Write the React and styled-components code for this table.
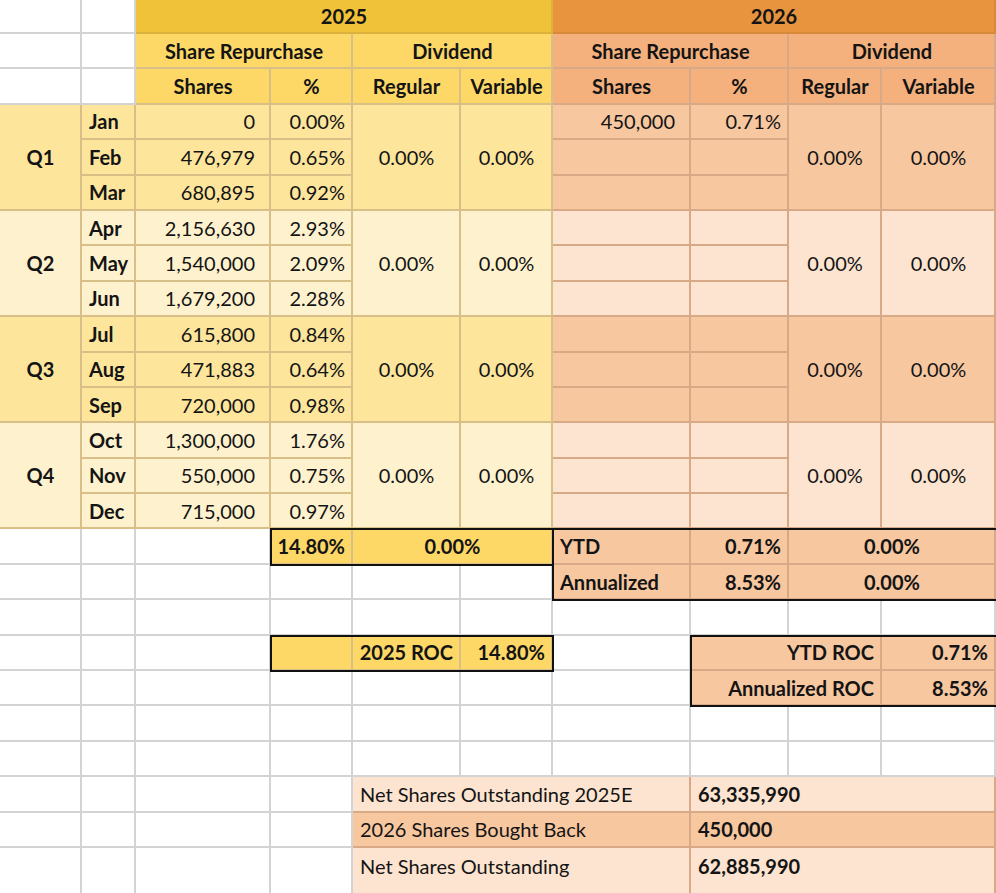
import styled, { createGlobalStyle } from 'styled-components'

const GlobalStyle = createGlobalStyle`
  html, body {
    margin: 0;
    padding: 0;
    background: #fff;
  }
  body {
    font-family: Lato, "Open Sans", "Liberation Sans", sans-serif;
    color: #141414;
    overflow: hidden;
  }
`

const P = {
  goldTitle: '#F0C239',
  goldHead: '#FDD867',
  goldA: '#FDE59C',
  goldB: '#FEF2CE',
  orTitle: '#E8943E',
  orHead: '#F4B07D',
  orA: '#F7C7A0',
  orB: '#FCE4D0',
  goldLine: '#D8BF88',
  orLine: '#D8A987',
  grid: '#D3D3D3',
}

const justify = { left: 'flex-start', right: 'flex-end', center: 'center' }

const Sheet = styled.div`
  display: grid;
  grid-template-columns: 82px 54px 135px 82px 108px 92px 138px 98px 93px 114px;
  grid-template-rows: 34px repeat(23, 35.4px) 1fr;
  width: 996px;
  height: 893px;
  overflow: hidden;
  font-size: 20px;
`

const Cell = styled.div`
  grid-column: ${(p) => p.$col} / span ${(p) => p.$cs || 1};
  grid-row: ${(p) => p.$row} / span ${(p) => p.$rs || 1};
  display: flex;
  align-items: center;
  justify-content: ${(p) => justify[p.$align || 'left']};
  box-sizing: border-box;
  padding: 0 ${(p) => p.$pr ?? 6}px ${(p) => (p.$row === 25 ? 9 : 0)}px 7px;
  background: ${(p) => p.$bg || '#fff'};
  border-right: 2px solid ${(p) => p.$line || P.grid};
  border-bottom: ${(p) => (p.$row === 25 ? 'none' : `2px solid ${p.$line || P.grid}`)};
  font-weight: ${(p) => (p.$bold ? 700 : 400)};
  white-space: nowrap;
  overflow: hidden;
`

// black outline drawn over a block of cells
const Frame = styled.div`
  grid-column: ${(p) => p.$col} / span ${(p) => p.$cs || 1};
  grid-row: ${(p) => p.$row} / span ${(p) => p.$rs || 1};
  margin: -1px ${(p) => (p.$edge ? -4 : -1)}px -1px -1px;
  border: 2px solid #111;
  z-index: 1;
  pointer-events: none;
`

const months = [
  ['Jan', '0', '0.00%', '450,000', '0.71%'],
  ['Feb', '476,979', '0.65%'],
  ['Mar', '680,895', '0.92%'],
  ['Apr', '2,156,630', '2.93%'],
  ['May', '1,540,000', '2.09%'],
  ['Jun', '1,679,200', '2.28%'],
  ['Jul', '615,800', '0.84%'],
  ['Aug', '471,883', '0.64%'],
  ['Sep', '720,000', '0.98%'],
  ['Oct', '1,300,000', '1.76%'],
  ['Nov', '550,000', '0.75%'],
  ['Dec', '715,000', '0.97%'],
]

const cells = []
const add = (col, row, text, o = {}) => cells.push({ col, row, text, cs: 1, rs: 1, ...o })

const gold = (bg) => ({ bg, line: P.goldLine })
const orange = (bg) => ({ bg, line: P.orLine })

// headers
add(3, 1, '2025', { cs: 4, bg: P.goldTitle, line: '#DDB23C', bold: true, align: 'center' })
add(7, 1, '2026', { cs: 4, bg: P.orTitle, line: '#D9893A', bold: true, align: 'center' })
;[
  [3, gold(P.goldHead)],
  [7, orange(P.orHead)],
].forEach(([c, s]) => {
  add(c, 2, 'Share Repurchase', { ...s, cs: 2, bold: true, align: 'center' })
  add(c + 2, 2, 'Dividend', { ...s, cs: 2, bold: true, align: 'center' })
  ;['Shares', '%', 'Regular', 'Variable'].forEach((t, i) =>
    add(c + i, 3, t, { ...s, bold: true, align: 'center' })
  )
})

// quarters
for (let q = 0; q < 4; q++) {
  const r0 = 4 + q * 3
  const g = gold(q % 2 ? P.goldB : P.goldA)
  const o = orange(q % 2 ? P.orB : P.orA)
  add(1, r0, `Q${q + 1}`, { ...g, rs: 3, bold: true, align: 'center' })
  for (let m = 0; m < 3; m++) {
    const [name, shares, pct, s26 = '', p26 = ''] = months[q * 3 + m]
    const r = r0 + m
    add(2, r, name, { ...g, bold: true })
    add(3, r, shares, { ...g, align: 'right', pr: 14 })
    add(4, r, pct, { ...g, align: 'right' })
    add(7, r, s26, { ...o, align: 'right', pr: 14 })
    add(8, r, p26, { ...o, align: 'right' })
  }
  add(5, r0, '0.00%', { ...g, rs: 3, align: 'center' })
  add(6, r0, '0.00%', { ...g, rs: 3, align: 'center' })
  add(9, r0, '0.00%', { ...o, rs: 3, align: 'center' })
  add(10, r0, '0.00%', { ...o, rs: 3, align: 'center' })
}

// totals
const gh = { ...gold(P.goldHead), bold: true }
const oa = { ...orange(P.orA), bold: true }
add(4, 16, '14.80%', { ...gh, align: 'right' })
add(5, 16, '0.00%', { ...gh, cs: 2, align: 'center' })
add(7, 16, 'YTD', oa)
add(8, 16, '0.71%', { ...oa, align: 'right' })
add(9, 16, '0.00%', { ...oa, cs: 2, align: 'center' })
add(7, 17, 'Annualized', oa)
add(8, 17, '8.53%', { ...oa, align: 'right' })
add(9, 17, '0.00%', { ...oa, cs: 2, align: 'center' })

// return of capital
add(4, 19, '', gh)
add(5, 19, '2025 ROC', { ...gh, align: 'right' })
add(6, 19, '14.80%', { ...gh, align: 'right' })
add(8, 19, 'YTD ROC', { ...oa, cs: 2, align: 'right' })
add(10, 19, '0.71%', { ...oa, align: 'right' })
add(8, 20, 'Annualized ROC', { ...oa, cs: 2, align: 'right' })
add(10, 20, '8.53%', { ...oa, align: 'right' })

// shares outstanding
;[
  ['Net Shares Outstanding 2025E', '63,335,990', P.orB],
  ['2026 Shares Bought Back', '450,000', P.orA],
  ['Net Shares Outstanding', '62,885,990', P.orB],
].forEach(([label, value, bg], i) => {
  add(5, 23 + i, label, { ...orange(bg), cs: 3 })
  add(8, 23 + i, value, { ...orange(bg), cs: 3, bold: true })
})

// fill the rest of the sheet with empty white cells
const taken = new Set()
cells.forEach((c) => {
  for (let r = c.row; r < c.row + c.rs; r++)
    for (let k = c.col; k < c.col + c.cs; k++) taken.add(`${r}-${k}`)
})
for (let r = 1; r <= 25; r++)
  for (let k = 1; k <= 10; k++) if (!taken.has(`${r}-${k}`)) add(k, r, '')

const frames = [
  { col: 4, row: 16, cs: 3, rs: 1 },
  { col: 7, row: 16, cs: 4, rs: 2, edge: true },
  { col: 4, row: 19, cs: 3, rs: 1 },
  { col: 8, row: 19, cs: 3, rs: 2, edge: true },
]

export default function App() {
  return (
    <>
      <GlobalStyle />
      <Sheet>
        {cells.map((c) => (
          <Cell
            key={`${c.row}-${c.col}`}
            $col={c.col}
            $row={c.row}
            $cs={c.cs}
            $rs={c.rs}
            $bg={c.bg}
            $line={c.line}
            $bold={c.bold}
            $align={c.align}
            $pr={c.pr}
          >
            {c.text}
          </Cell>
        ))}
        {frames.map((f) => (
          <Frame
            key={`${f.row}-${f.col}`}
            $col={f.col}
            $row={f.row}
            $cs={f.cs}
            $rs={f.rs}
            $edge={f.edge}
          />
        ))}
      </Sheet>
    </>
  )
}
